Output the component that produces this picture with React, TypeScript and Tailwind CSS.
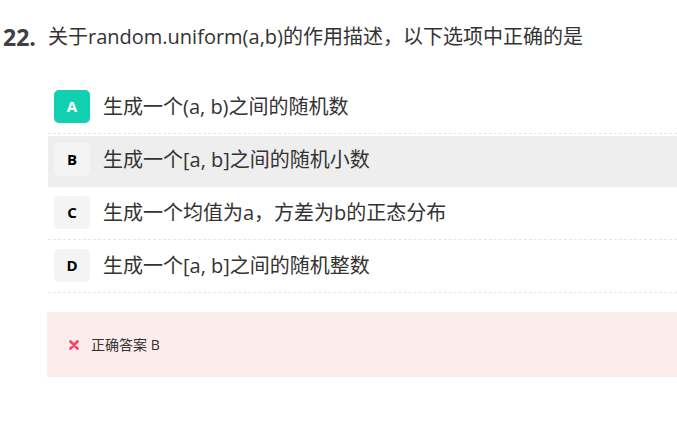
import React from "react";

const opts = [
  { k: "A", t: "生成一个(a, b)之间的随机数", sel: true },
  { k: "B", t: "生成一个[a, b]之间的随机小数", hi: true },
  { k: "C", t: "生成一个均值为a，方差为b的正态分布" },
  { k: "D", t: "生成一个[a, b]之间的随机整数" },
];

export default function App() {
  return (
    <div
      className="w-[677px] h-[424px] bg-white overflow-hidden text-[#333]"
      style={{ fontFamily: '"Open Sans", "Noto Sans CJK SC", sans-serif' }}
    >
      <div className="flex items-center pt-[23px] h-[51px]">
        <div className="w-[48px] pl-[3px] text-[23px] font-bold leading-[28px] text-[#404040]">22.</div>
        <div className="text-[20px] leading-[28px] whitespace-nowrap">
          关于random.uniform(a,b)的作用描述，以下选项中正确的是
        </div>
      </div>
      <div className="ml-[48px] mt-[32px] flex flex-col gap-[2px]">
        {opts.map((o) => (
          <div
            key={o.k}
            className={
              "flex items-center gap-[13px] pl-[6px] pt-[7px] pb-[10px] border-b border-dashed " +
              (o.hi ? "bg-[#eeeeee] border-[#eeeeee]" : "border-[#e6e6e6]")
            }
          >
            <div
              className={
                "w-[36px] h-[33px] rounded-[5px] flex items-center justify-center text-[15px] font-bold " +
                (o.sel ? "bg-[#10d0b1] text-white" : "bg-[#f4f4f4] text-black")
              }
            >
              {o.k}
            </div>
            <div className="text-[20px] leading-[28px] whitespace-nowrap">{o.t}</div>
          </div>
        ))}
      </div>
      <div className="ml-[47px] mt-[19px] h-[65px] bg-[#fdecec] flex items-center pl-[22px] gap-[12px]">
        <svg width="10" height="10" viewBox="0 0 10 10">
          <path d="M1.5 1.5 L8.5 8.5 M8.5 1.5 L1.5 8.5" stroke="#f5476a" strokeWidth="2.8" strokeLinecap="round" />
        </svg>
        <span className="text-[14px] leading-[20px] text-[#333]">正确答案 B</span>
      </div>
    </div>
  );
}
